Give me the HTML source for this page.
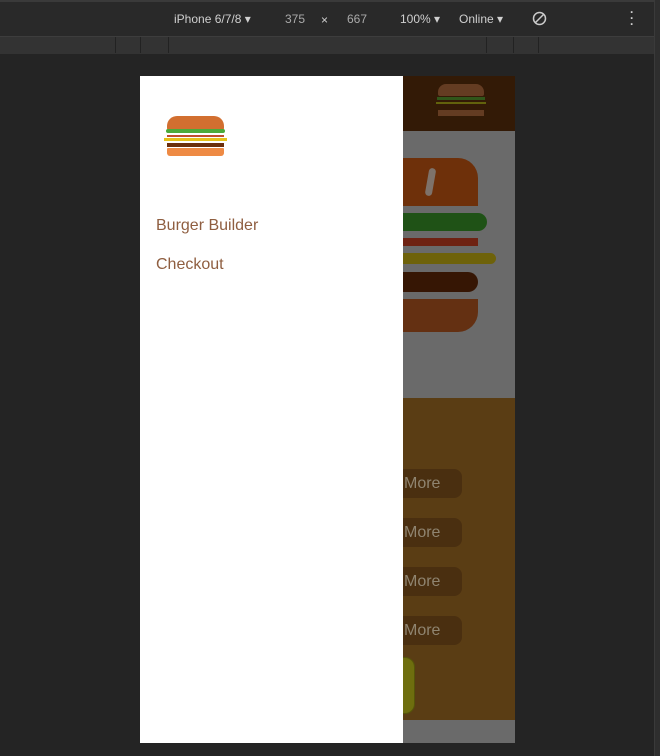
<!DOCTYPE html><html><head><style>
body{margin:0;width:660px;height:756px;background:#242424;position:relative;overflow:hidden;font-family:"Liberation Sans",sans-serif}
.a{position:absolute}
.tb{color:#d0d0d0;font-size:12px}
.m{width:66px;height:29px;background:#4a2f10;border-radius:8px;color:#8f8470;font-size:16px;line-height:29px;text-indent:8px}
</style></head><body>
<div class="a" style="left:0;top:0;width:660px;height:36px;background:#292929;border-top:2px solid #3a3a3a;box-sizing:border-box"></div>
<div class="a" style="left:0;top:36px;width:660px;height:17px;background:#333;border-top:1px solid #3d3d3d"></div>
<div class="a" style="left:115px;top:37px;width:1px;height:16px;background:#222"></div>
<div class="a" style="left:140px;top:37px;width:1px;height:16px;background:#222"></div>
<div class="a" style="left:168px;top:37px;width:1px;height:16px;background:#222"></div>
<div class="a" style="left:486px;top:37px;width:1px;height:16px;background:#222"></div>
<div class="a" style="left:513px;top:37px;width:1px;height:16px;background:#222"></div>
<div class="a" style="left:538px;top:37px;width:1px;height:16px;background:#222"></div>
<div class="a" style="left:654px;top:0;width:6px;height:756px;background:#2e2e2e;border-left:1px solid #3a3a3a"></div>
<div class="a tb" style="left:174px;top:12px">iPhone 6/7/8 ▾</div>
<div class="a tb" style="left:285px;top:12px;color:#aaa">375</div>
<div class="a tb" style="left:321px;top:13px">×</div>
<div class="a tb" style="left:347px;top:12px;color:#aaa">667</div>
<div class="a tb" style="left:400px;top:12px">100% ▾</div>
<div class="a tb" style="left:459px;top:12px">Online ▾</div>
<svg class="a" style="left:532px;top:11px" width="15" height="15" viewBox="0 0 15 15"><circle cx="7.5" cy="7.5" r="6" fill="none" stroke="#ccc" stroke-width="1.5"/><line x1="3" y1="12" x2="12" y2="3" stroke="#ccc" stroke-width="1.5"/></svg>
<div class="a tb" style="left:630px;top:9px;font-weight:bold;line-height:6px">·<br>·<br>·</div>

<div class="a" style="left:403px;top:76px;width:112px;height:55px;background:#331a06"></div>
<div class="a" style="left:438px;top:84px;width:46px;height:12px;background:#643c22;border-radius:8px 8px 2px 2px"></div>
<div class="a" style="left:437px;top:97px;width:48px;height:3px;background:#30561a"></div>
<div class="a" style="left:436px;top:102px;width:50px;height:2px;background:#62620c"></div>
<div class="a" style="left:438px;top:110px;width:46px;height:6px;background:#643c22"></div>
<div class="a" style="left:403px;top:131px;width:112px;height:267px;background:#6a6a6a"></div>
<div class="a" style="left:403px;top:158px;width:75px;height:48px;background:#6e300a;border-radius:0 20px 0 0"></div>
<div class="a" style="left:427px;top:168px;width:7px;height:28px;background:#7e726a;border-radius:4px;transform:rotate(10deg)"></div>
<div class="a" style="left:403px;top:213px;width:84px;height:18px;background:#1f5216;border-radius:0 9px 9px 0"></div>
<div class="a" style="left:403px;top:238px;width:75px;height:8px;background:#6e2212"></div>
<div class="a" style="left:403px;top:253px;width:93px;height:11px;background:#6e620a;border-radius:0 6px 6px 0"></div>
<div class="a" style="left:403px;top:272px;width:75px;height:20px;background:#361604;border-radius:0 10px 10px 0"></div>
<div class="a" style="left:403px;top:299px;width:75px;height:33px;background:#643012;border-radius:0 0 20px 0"></div>
<div class="a" style="left:403px;top:398px;width:112px;height:322px;background:#5a3d14"></div>
<div class="a" style="left:403px;top:720px;width:112px;height:23px;background:#6a6a6a"></div>
<div class="a m" style="left:396px;top:469px">More</div>
<div class="a m" style="left:396px;top:518px">More</div>
<div class="a m" style="left:396px;top:567px">More</div>
<div class="a m" style="left:396px;top:616px">More</div>
<div class="a" style="left:380px;top:657px;width:33px;height:55px;background:#6e6e0e;border-radius:10px;border:1px solid #55550a"></div>

<div class="a" style="left:140px;top:76px;width:263px;height:667px;background:#fff"></div>
<div class="a" style="left:167px;top:116px;width:57px;height:14px;background:#d26f30;border-radius:10px 10px 2px 2px"></div>
<div class="a" style="left:166px;top:129px;width:59px;height:4px;background:#4caa3a;border-radius:2px"></div>
<div class="a" style="left:167px;top:135px;width:57px;height:2px;background:#c0502e"></div>
<div class="a" style="left:164px;top:138px;width:63px;height:3px;background:#e6c21a"></div>
<div class="a" style="left:167px;top:143px;width:57px;height:4px;background:#6b2e0c"></div>
<div class="a" style="left:167px;top:148px;width:57px;height:8px;background:#ee8a44;border-radius:1px 1px 3px 3px"></div>
<div class="a" style="left:156px;top:217px;font-size:16px;color:#8f5e40">Burger Builder</div>
<div class="a" style="left:156px;top:256px;font-size:16px;color:#8f5e40">Checkout</div>
</body></html>
